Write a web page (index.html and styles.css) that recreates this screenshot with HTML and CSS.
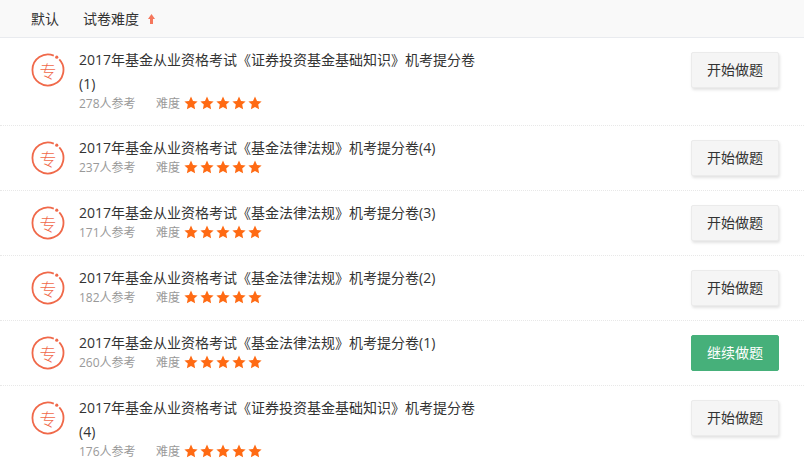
FILE: index.html
```html
<!DOCTYPE html>
<html lang="zh-CN">
<head>
<meta charset="utf-8">
<title>试卷列表</title>
<link rel="stylesheet" href="styles.css">
</head>
<body>
<svg class="defs" width="0" height="0">
	<symbol id="ring" viewBox="0 0 34 34">
		<path d="M22.8 2.600A15.500 15.500 0 1 0 28.300 6.400" fill="none" stroke="#f0694a" stroke-width="1.800"/>
		<circle cx="25.750" cy="4.200" r="1.600" fill="#f0694a"/>
	</symbol>
	<symbol id="star" viewBox="0 0 14 14">
		<path d="M7 .6L9 4.900L13.600 5.400L10.200 8.600L11.100 13.200L7 10.900L2.900 13.200L3.800 8.600L.4 5.400L5 4.900Z" fill="#ff6a13"/>
	</symbol>
</svg>

<div class="sort_bar">
	<span class="sort_item">默认</span>
	<span class="sort_item">试卷难度</span>
	<svg class="sort_arrow" width="7" height="10" viewBox="0 0 7 10"><path d="M3.500 0L7 5H5V10H2V5H0Z" fill="#f5775c"/></svg>
</div>

<ul class="paper_list">
	<li class="paper_row">
		<svg class="paper_icon"><use href="#ring"/><text class="zhuan_text" x="17" y="25" text-anchor="middle">专</text></svg>
		<div class="paper_info">
			<div class="paper_title">2017年基金从业资格考试《证券投资基金基础知识》机考提分卷(1)</div>
			<div class="paper_meta">
				<span class="paper_count">278人参考</span>
				<span class="paper_level">难度</span>
				<span class="paper_stars"><svg><use href="#star"/></svg><svg><use href="#star"/></svg><svg><use href="#star"/></svg><svg><use href="#star"/></svg><svg><use href="#star"/></svg></span>
			</div>
		</div>
		<a class="paper_btn">开始做题</a>
	</li>
	<li class="paper_row">
		<svg class="paper_icon"><use href="#ring"/><text class="zhuan_text" x="17" y="25" text-anchor="middle">专</text></svg>
		<div class="paper_info">
			<div class="paper_title">2017年基金从业资格考试《基金法律法规》机考提分卷(4)</div>
			<div class="paper_meta">
				<span class="paper_count">237人参考</span>
				<span class="paper_level">难度</span>
				<span class="paper_stars"><svg><use href="#star"/></svg><svg><use href="#star"/></svg><svg><use href="#star"/></svg><svg><use href="#star"/></svg><svg><use href="#star"/></svg></span>
			</div>
		</div>
		<a class="paper_btn">开始做题</a>
	</li>
	<li class="paper_row">
		<svg class="paper_icon"><use href="#ring"/><text class="zhuan_text" x="17" y="25" text-anchor="middle">专</text></svg>
		<div class="paper_info">
			<div class="paper_title">2017年基金从业资格考试《基金法律法规》机考提分卷(3)</div>
			<div class="paper_meta">
				<span class="paper_count">171人参考</span>
				<span class="paper_level">难度</span>
				<span class="paper_stars"><svg><use href="#star"/></svg><svg><use href="#star"/></svg><svg><use href="#star"/></svg><svg><use href="#star"/></svg><svg><use href="#star"/></svg></span>
			</div>
		</div>
		<a class="paper_btn">开始做题</a>
	</li>
	<li class="paper_row">
		<svg class="paper_icon"><use href="#ring"/><text class="zhuan_text" x="17" y="25" text-anchor="middle">专</text></svg>
		<div class="paper_info">
			<div class="paper_title">2017年基金从业资格考试《基金法律法规》机考提分卷(2)</div>
			<div class="paper_meta">
				<span class="paper_count">182人参考</span>
				<span class="paper_level">难度</span>
				<span class="paper_stars"><svg><use href="#star"/></svg><svg><use href="#star"/></svg><svg><use href="#star"/></svg><svg><use href="#star"/></svg><svg><use href="#star"/></svg></span>
			</div>
		</div>
		<a class="paper_btn">开始做题</a>
	</li>
	<li class="paper_row">
		<svg class="paper_icon"><use href="#ring"/><text class="zhuan_text" x="17" y="25" text-anchor="middle">专</text></svg>
		<div class="paper_info">
			<div class="paper_title">2017年基金从业资格考试《基金法律法规》机考提分卷(1)</div>
			<div class="paper_meta">
				<span class="paper_count">260人参考</span>
				<span class="paper_level">难度</span>
				<span class="paper_stars"><svg><use href="#star"/></svg><svg><use href="#star"/></svg><svg><use href="#star"/></svg><svg><use href="#star"/></svg><svg><use href="#star"/></svg></span>
			</div>
		</div>
		<a class="paper_btn paper_btn_go">继续做题</a>
	</li>
	<li class="paper_row">
		<svg class="paper_icon"><use href="#ring"/><text class="zhuan_text" x="17" y="25" text-anchor="middle">专</text></svg>
		<div class="paper_info">
			<div class="paper_title">2017年基金从业资格考试《证券投资基金基础知识》机考提分卷(4)</div>
			<div class="paper_meta">
				<span class="paper_count">176人参考</span>
				<span class="paper_level">难度</span>
				<span class="paper_stars"><svg><use href="#star"/></svg><svg><use href="#star"/></svg><svg><use href="#star"/></svg><svg><use href="#star"/></svg><svg><use href="#star"/></svg></span>
			</div>
		</div>
		<a class="paper_btn">开始做题</a>
	</li>
</ul>
</body>
</html>
```

FILE: styles.css
```css
*{ margin:0; padding:0; box-sizing:border-box; }
html,body{ height:100%; overflow:hidden; }
body{
	background:#fff;
	color:#333;
	font:14px/24px "Open Sans","Noto Sans CJK SC",sans-serif;
}
.defs{ position:absolute; }
.zhuan_text{
	fill:#f0694a;
	font-family:"Noto Sans CJK SC",sans-serif;
	font-size:17px;
	font-weight:300;
}

.sort_bar{
	display:flex;
	align-items:center;
	height:38px;
	padding-left:31px;
	background:#f9f9f9;
	border-bottom:1px solid #e9ebef;
	font-size:14px;
}
.sort_item{ margin-right:24px; }
.sort_item + .sort_item{ margin-right:9px; }
.sort_arrow{ display:block; margin-top:1px; }

.paper_list{ list-style:none; }
.paper_row{
	display:flex;
	align-items:flex-start;
	min-height:65px;
	padding:10px 25px 13px 31px;
	border-bottom:1px dotted #e8e8e8;
}
.paper_icon{
	flex:none;
	width:34px;
	height:34px;
	margin-top:5px;
	margin-right:14px;
}
.paper_info{ width:404px; margin-right:208px; }
.paper_title{ color:#333; }
.paper_meta{
	display:flex;
	align-items:center;
	height:16px;
	color:#999;
	font-size:12px;
	line-height:16px;
}
.paper_count{ width:77px; }
.paper_level{ margin-right:4px; }
.paper_stars{ display:flex; gap:2px; margin-top:-2px; }
.paper_stars svg{ display:block; width:14px; height:14px; }

.paper_btn{
	flex:none;
	width:88px;
	height:36px;
	margin-top:4px;
	background:#f5f5f5;
	border:1px solid #ebebeb;
	border-radius:2px;
	box-shadow:1px 2px 3px #e3e3e3;
	color:#333;
	font-size:14px;
	line-height:34px;
	text-align:center;
}
.paper_btn_go{
	background:#46b07a;
	border-color:#46b07a;
	box-shadow:none;
	color:#fff;
}
```
